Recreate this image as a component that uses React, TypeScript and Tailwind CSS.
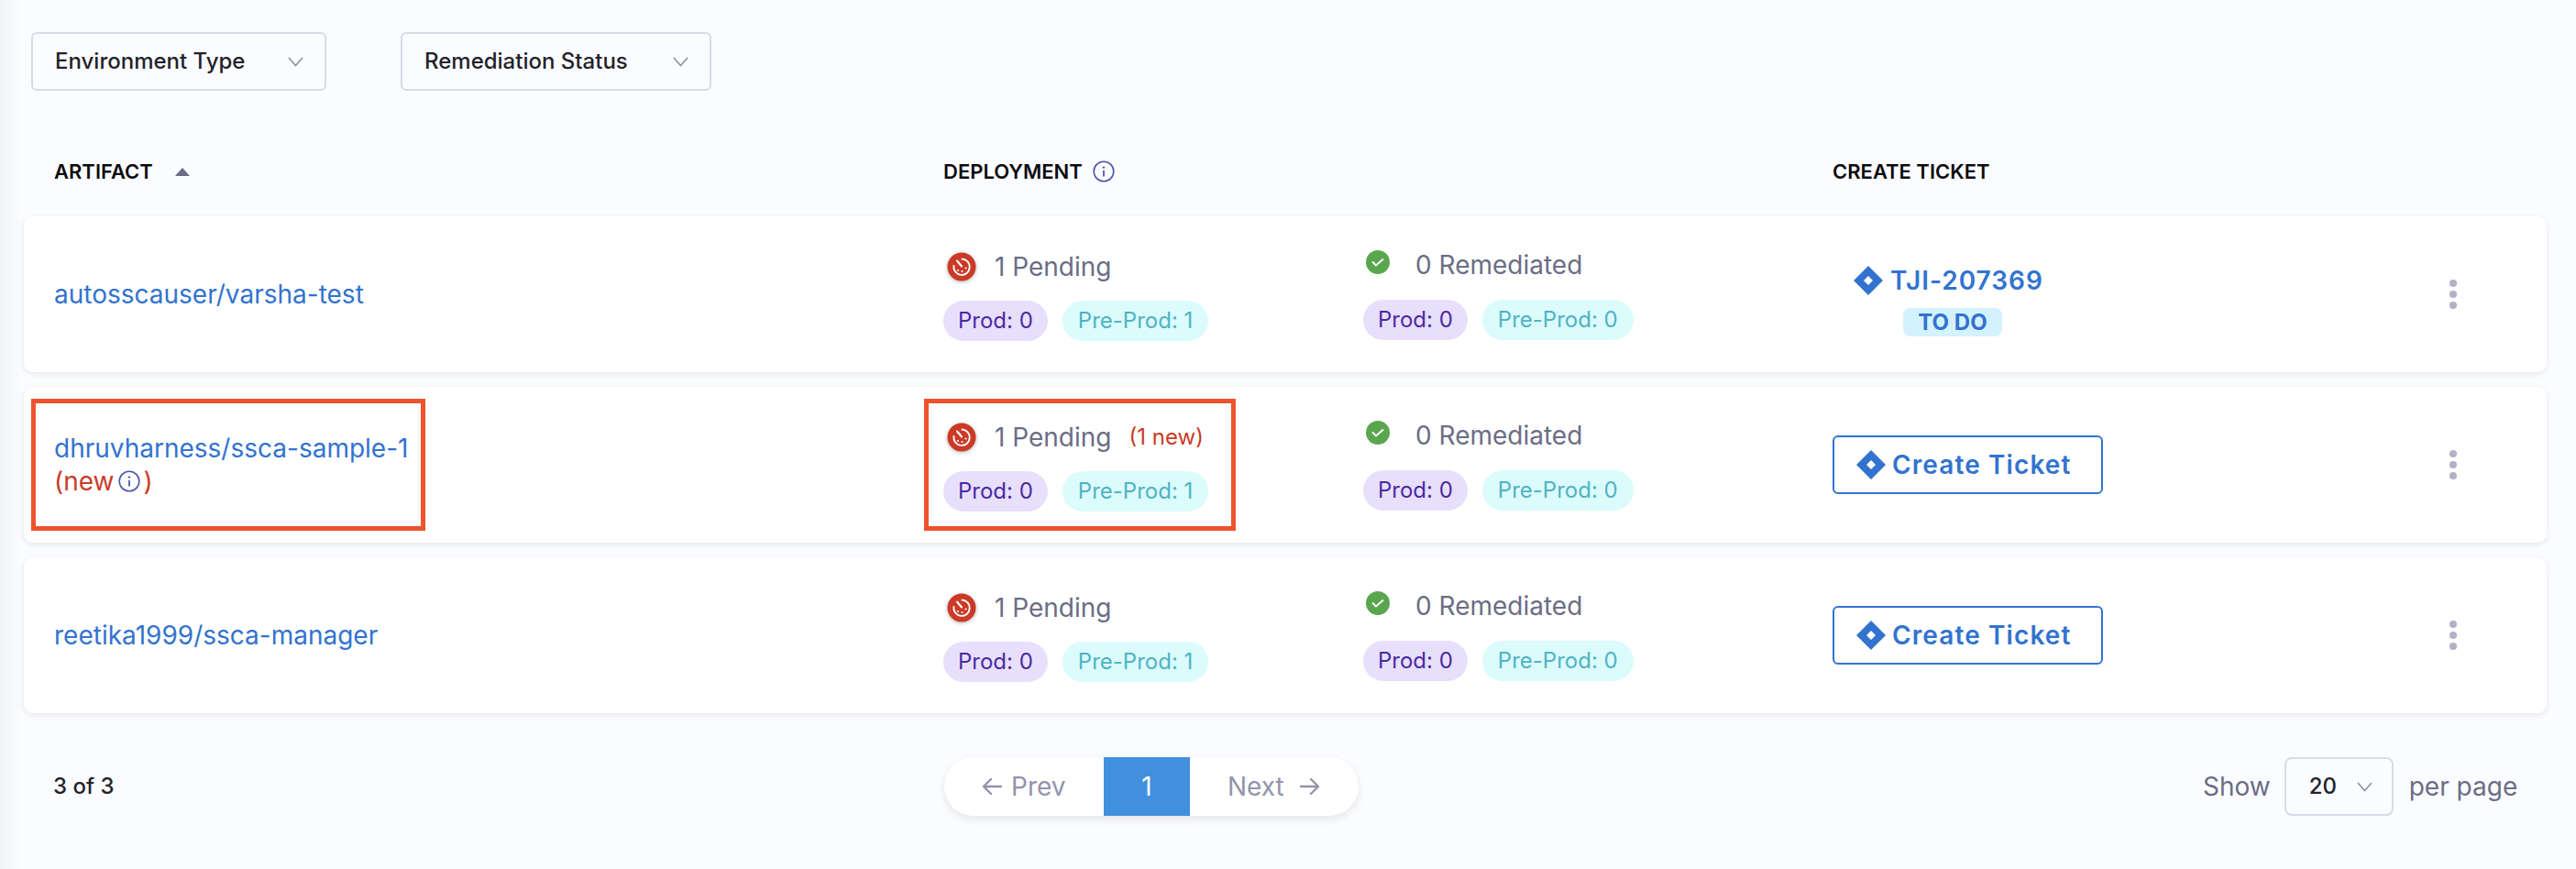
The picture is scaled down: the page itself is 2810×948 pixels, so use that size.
import React from "react";

const Chevron = () => (
  <svg viewBox="0 0 17 11" fill="none" className="h-[11px] w-[17px] shrink-0">
    <path d="M1 1l7.5 8.5L16 1" stroke="#8d8ea6" strokeWidth="1.6" />
  </svg>
);

const Arrow = ({ right }: { right?: boolean }) => (
  <svg viewBox="0 0 22 20" fill="none" className="h-[20px] w-[22px] shrink-0">
    {right ? (
      <path d="M1 10h19M12 2l8 8-8 8" stroke="#9293ab" strokeWidth="2.4" strokeLinecap="round" strokeLinejoin="round" />
    ) : (
      <path d="M21 10H2M10 2l-8 8 8 8" stroke="#9293ab" strokeWidth="2.4" strokeLinecap="round" strokeLinejoin="round" />
    )}
  </svg>
);

const Diamond = ({ className }: { className?: string }) => (
  <svg viewBox="0 0 32 32" className={className}>
    <path
      fillRule="evenodd"
      d="M16 0 32 16 16 32 0 16ZM16 11 11 16 16 21 21 16Z"
      fill="#3273cf"
    />
  </svg>
);

const InfoIcon = ({ className }: { className?: string }) => (
  <svg viewBox="0 0 24 24" fill="none" className={className}>
    <circle cx="12" cy="12" r="10.8" stroke="#4a56ad" strokeWidth="1.6" />
    <circle cx="12" cy="7.6" r="1.2" fill="#4a56ad" />
    <path d="M12 11v6.5" stroke="#4a56ad" strokeWidth="1.8" />
  </svg>
);

// red disc with a stopwatch style mark, same as the overdue status icon
const PendingIcon = () => (
  <svg viewBox="0 0 32 32" className="h-[32px] w-[32px] shrink-0 drop-shadow-[0_1px_2px_rgba(0,0,0,0.3)]">
    <circle cx="16" cy="16" r="15.5" fill="#cb3a26" />
    <path
      d="M16.5 7.5A8.7 8.7 0 1 1 7.4 15"
      fill="none"
      stroke="#fff"
      strokeWidth="1.9"
      strokeLinecap="round"
    />
    <path d="M11 9.5l5 6" stroke="#fff" strokeWidth="2.1" strokeLinecap="round" />
    <circle cx="12" cy="20" r="1.1" fill="#fff" />
    <circle cx="16.5" cy="21" r="1.1" fill="#fff" />
    <circle cx="20.5" cy="17.5" r="1.1" fill="#fff" />
  </svg>
);

const CheckIcon = () => (
  <svg viewBox="0 0 26 26" className="h-[26px] w-[26px] shrink-0">
    <circle cx="13" cy="13" r="13" fill="#5aa64f" />
    <path d="M7 12.5l4 4 8-7" fill="none" stroke="#fff" strokeWidth="1.9" />
  </svg>
);

const Pill = ({ label, pre }: { label: string; pre?: boolean }) => (
  <span
    className={
      pre
        ? "flex h-[44px] items-center rounded-full bg-[#dbfbfd] px-[17px] text-[24px] text-[#4fb3c3]"
        : "flex h-[44px] items-center rounded-full bg-[#e8dffc] px-[16px] text-[24px] text-[#4a2aa3]"
    }
  >
    {label}
  </span>
);

const Deployment = ({ isNew }: { isNew?: boolean }) => (
  <div className="flex w-[970px] shrink-0">
    <div className="flex w-[458px] shrink-0 flex-col pt-[35px]">
      <div className="flex h-[40px] items-center">
        <span className="ml-[4px]">
          <PendingIcon />
        </span>
        <span className="ml-[20px] text-[28px] text-[#6b6d85]">1 Pending</span>
        {isNew && <span className="ml-[19px] text-[24px] text-[#cb3a26]">(1 new)</span>}
      </div>
      <div className="mt-[17px] flex gap-[16px]">
        <Pill label="Prod: 0" />
        <Pill label="Pre-Prod: 1" pre />
      </div>
    </div>
    <div className="flex flex-col pt-[30px]">
      <div className="flex h-[40px] items-center">
        <span className="ml-[3px]">
          <CheckIcon />
        </span>
        <span className="ml-[28px] mt-[6px] text-[28px] text-[#6b6d85]">0 Remediated</span>
      </div>
      <div className="mt-[21px] flex gap-[16px]">
        <Pill label="Prod: 0" />
        <Pill label="Pre-Prod: 0" pre />
      </div>
    </div>
  </div>
);

const CreateTicket = () => (
  <button className="flex h-[64px] w-[295px] items-center rounded-[6px] border-2 border-[#3273cf] bg-white pl-[24px] text-[28px] font-semibold tracking-[1.1px] text-[#3273cf]">
    <Diamond className="h-[32px] w-[32px]" />
    <span className="ml-[7px]">Create Ticket</span>
  </button>
);

const Ticket = () => (
  <div className="flex flex-col items-start pl-[23px] pt-[10px]">
    <div className="flex items-center text-[28px] font-semibold tracking-[1px] text-[#3273cf]">
      <Diamond className="h-[32px] w-[32px]" />
      <span className="ml-[8px]">TJI-207369</span>
    </div>
    <span className="ml-[54px] mt-[9px] flex h-[31px] w-[108px] items-center justify-center rounded-[8px] bg-[#d4f2fd] text-[24px] font-bold text-[#3273cf]">
      TO DO
    </span>
  </div>
);

const Kebab = () => (
  <div className="flex flex-col gap-[4px]">
    <span className="h-[8px] w-[8px] rounded-full bg-[#b0b1c4]" />
    <span className="h-[8px] w-[8px] rounded-full bg-[#b0b1c4]" />
    <span className="h-[8px] w-[8px] rounded-full bg-[#b0b1c4]" />
  </div>
);

const Row = ({
  artifact,
  ticket,
  isNew,
}: {
  artifact: string;
  ticket?: boolean;
  isNew?: boolean;
}) => (
  <div className="relative flex h-[170px] items-stretch rounded-[10px] bg-white pl-[33px] shadow-[0_2px_6px_rgba(40,41,61,0.1)]">
    <div className="flex w-[970px] shrink-0 flex-col justify-center text-[28px] leading-[36px] text-[#3273cf]">
      <div>{artifact}</div>
      {isNew && (
        <div className="flex items-center text-[#cb3a26]">
          (new
          <InfoIcon className="mx-[4px] h-[24px] w-[24px]" />)
        </div>
      )}
    </div>
    <Deployment isNew={isNew} />
    <div className="flex w-[673px] shrink-0 items-center">{ticket ? <Ticket /> : <CreateTicket />}</div>
    <div className="flex items-center">
      <Kebab />
    </div>
    {isNew && (
      <>
        <div className="absolute left-[8px] top-[13px] h-[144px] w-[430px] border-[5px] border-[#ee532d]" />
        <div className="absolute left-[982px] top-[13px] h-[144px] w-[340px] border-[5px] border-[#ee532d]" />
      </>
    )}
  </div>
);

const Filter = ({ label, width }: { label: string; width: string }) => (
  <div className={`flex h-[64px] items-center justify-between rounded-[6px] border-2 border-[#d9dae5] pl-[24px] pr-[23px] text-[24px] font-medium text-[#22222a] ${width}`}>
    {label}
    <Chevron />
  </div>
);

const App = () => {
  return (
    <div className="h-[948px] w-[2810px] overflow-hidden bg-[#fbfcff] bg-[linear-gradient(90deg,#f2f3f8_0px,#f7f8fc_14px,#fbfcff_24px)] font-['Inter',sans-serif]">
      <div className="flex gap-[81px] pl-[34px] pt-[35px]">
        <Filter label="Environment Type" width="w-[322px]" />
        <Filter label="Remediation Status" width="w-[339px]" />
      </div>

      <div className="mt-[64px] flex h-[48px] items-center pl-[59px] text-[22px] font-semibold text-[#0b0b0d]">
        <div className="flex w-[970px] items-center">
          ARTIFACT
          <span className="ml-[24px] h-0 w-0 border-x-[8px] border-b-[9px] border-x-transparent border-b-[#6b6d85]" />
        </div>
        <div className="flex w-[970px] items-center">
          DEPLOYMENT
          <InfoIcon className="ml-[11px] h-[24px] w-[24px]" />
        </div>
        <div>CREATE TICKET</div>
      </div>

      <div className="ml-[26px] mt-[25px] flex w-[2752px] flex-col gap-[16px]">
        <Row artifact="autosscauser/varsha-test" ticket />
        <Row artifact="dhruvharness/ssca-sample-1" isNew />
        <Row artifact="reetika1999/ssca-manager" />
      </div>

      <div className="mt-[48px] flex items-center pl-[58px] text-[24px]">
        <div className="w-[972px] font-medium text-[#22222a]">3 of 3</div>
        <div className="flex h-[64px] w-[452px] items-stretch overflow-hidden rounded-full bg-white text-[28px] text-[#9293ab] shadow-[0_4px_10px_rgba(40,41,61,0.1)]">
          <div className="flex w-[174px] items-center pl-[41px]">
            <Arrow />
            <span className="ml-[10px]">Prev</span>
          </div>
          <div className="flex w-[94px] items-center justify-center bg-[#4190dd] text-white">1</div>
          <div className="flex flex-1 items-center pl-[41px]">
            Next
            <span className="ml-[17px]">
              <Arrow right />
            </span>
          </div>
        </div>
        <div className="ml-[921px] flex items-center text-[#6b6d85] text-[28px]">
          Show
          <div className="ml-[15px] flex h-[64px] w-[119px] items-center rounded-[8px] border-2 border-[#d9dae5] pl-[25px] text-[24px] font-medium text-[#22222a]">
            20
            <span className="ml-[22px]">
              <Chevron />
            </span>
          </div>
          <span className="ml-[17px]">per page</span>
        </div>
      </div>
    </div>
  );
};

export default App;
